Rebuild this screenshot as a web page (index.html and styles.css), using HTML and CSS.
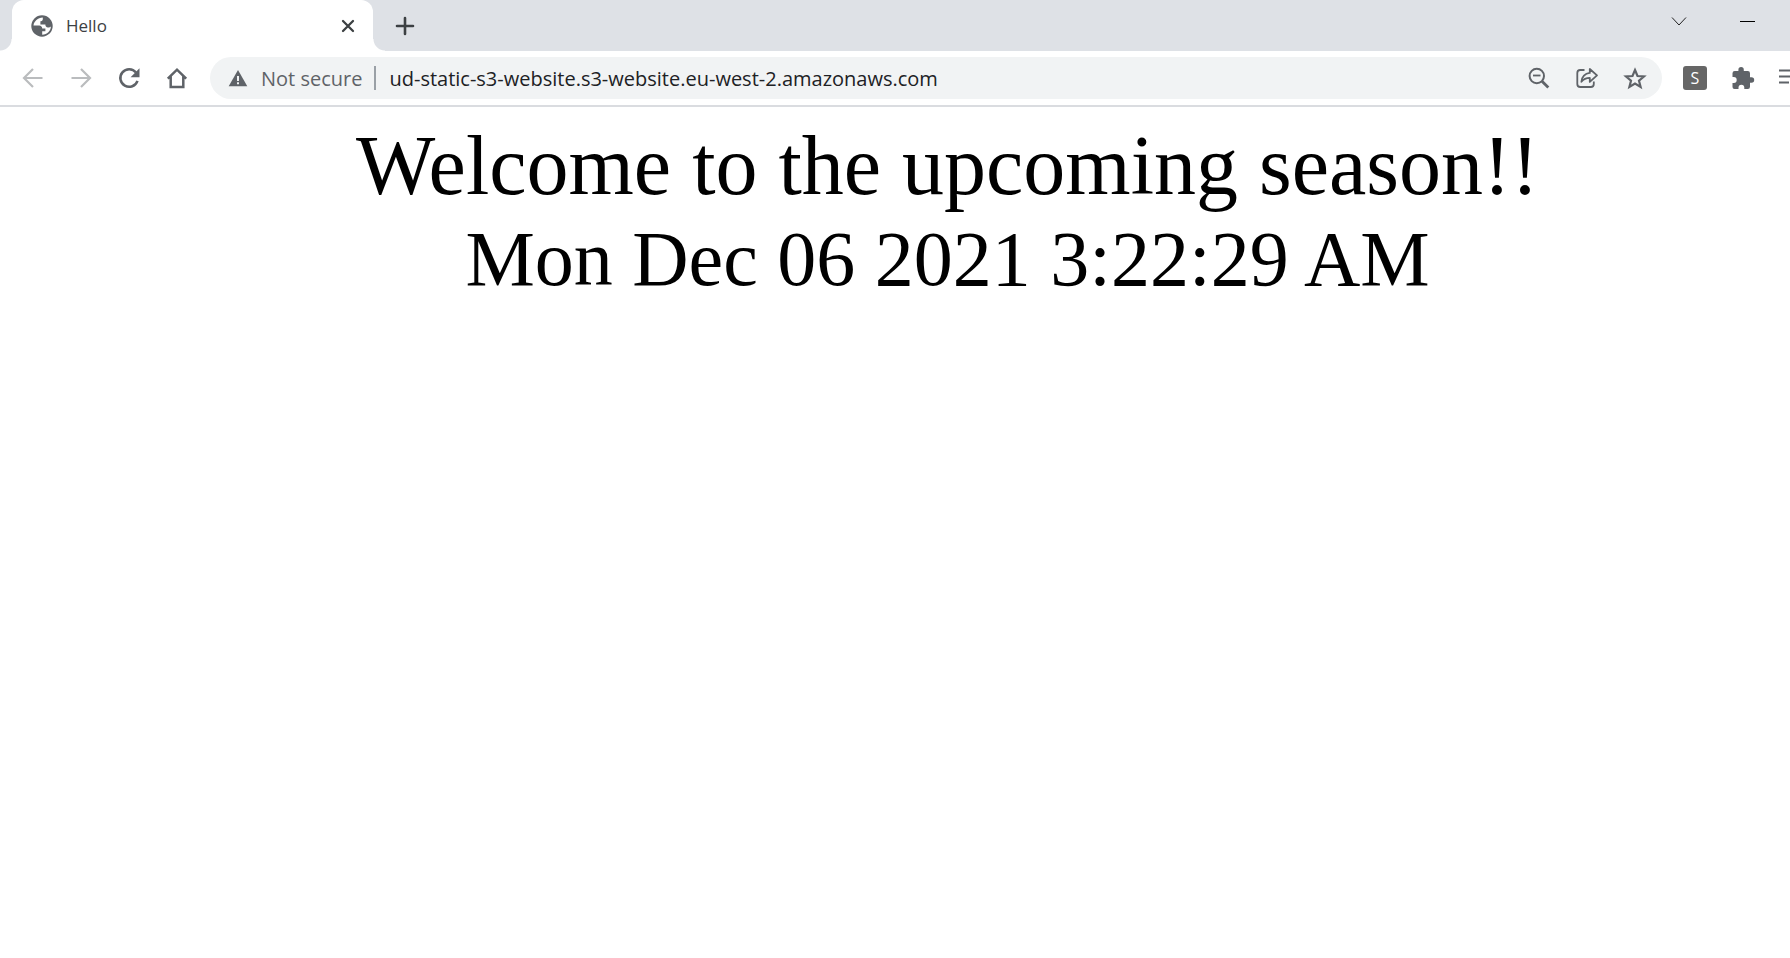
FILE: index.html
```html
<!DOCTYPE html>
<html lang="en">
<head>
<meta charset="utf-8">
<title>Hello</title>
<link rel="stylesheet" href="styles.css">
</head>
<body>
<header class="browser">
  <div class="tabstrip">
    <div class="tab">
      <svg class="icon" width="24" height="24" viewBox="0 0 24 24"><circle cx="12" cy="12" r="10.700" fill="#5f6368"/><path fill="#fff" d="M12.800 3.600c-5 .4-8.900 3.700-9.300 7.900h5.700c1.900.1 3 1.300 3 3.100h3.200v2.700h-3.200v3.400c5-.2 8.500-3.700 8.700-8.300-.8.900-1.700 1.300-2.900 1.100-1.800-.2-2.700-1.500-2.600-3.100h-5V7.200c2 .1 2.700-.7 2.400-3.600z"/></svg>
      <span class="tab-title">Hello</span>
      <button class="tab-close" aria-label="Close tab"><svg width="14" height="14" viewBox="0 0 14 14"><path d="M2 2l10 10M12 2L2 12" stroke="#3c4043" stroke-width="2.300" stroke-linecap="round"/></svg></button>
    </div>
    <button class="tool new-tab" aria-label="New tab"><svg width="20" height="20" viewBox="0 0 20 20"><path d="M10 2v16M2 10h16" stroke="#3c4043" stroke-width="2.600" stroke-linecap="round"/></svg></button>
    <div class="window-controls">
      <button class="window-button" aria-label="Search tabs"><svg width="16" height="10" viewBox="0 0 16 10"><path d="M1 1.500l7 7.500 7-7.500" fill="none" stroke="#222" stroke-width="1"/></svg></button>
      <button class="window-button" aria-label="Minimize"><svg width="16" height="10" viewBox="0 0 16 10"><path d="M0 5.500h15" stroke="#000" stroke-width="1"/></svg></button>
    </div>
  </div>
  <div class="toolbar">
    <button class="tool" aria-label="Back" disabled><svg width="24" height="24" viewBox="0 0 24 24"><path d="M21.500 12H3.500M12 3L3 12l9 9" fill="none" stroke="#babcbe" stroke-width="2.200"/></svg></button>
    <button class="tool" aria-label="Forward" disabled><svg width="24" height="24" viewBox="0 0 24 24"><path d="M2.500 12h18M12 3l9 9-9 9" fill="none" stroke="#babcbe" stroke-width="2.200"/></svg></button>
    <button class="tool" aria-label="Reload"><svg width="24" height="24" viewBox="0 0 24 24"><path d="M19 6.500A8.800 8.800 0 1 0 20.500 14.800" fill="none" stroke="#5f6368" stroke-width="2.500"/><path d="M22.500 2.300v8.900h-8.900z" fill="#5f6368"/></svg></button>
    <button class="tool" aria-label="Home"><svg width="24" height="24" viewBox="0 0 24 24"><path d="M2.800 12.600L12 3.700l9.200 8.900M5.700 10.500v10.600h12.600V10.500" fill="none" stroke="#5f6368" stroke-width="2.500"/></svg></button>
    <form class="omnibox">
      <svg class="icon" width="20" height="18" viewBox="0 0 20 18"><path d="M10 1l9.300 16.300H.7z" fill="#5f6368"/><path d="M10 7v5M10 13.200v2" stroke="#f1f3f4" stroke-width="2"/></svg>
      <label class="security" for="url">Not secure</label>
      <span class="divider"></span>
      <input class="url" id="url" type="text" spellcheck="false" value="ud-static-s3-website.s3-website.eu-west-2.amazonaws.com">
      <button class="tool" type="button" aria-label="Zoom"><svg width="24" height="24" viewBox="0 0 24 24"><circle cx="9.800" cy="10" r="7.200" fill="none" stroke="#5f6368" stroke-width="2"/><path d="M6 9.500h7.500" stroke="#5f6368" stroke-width="1.800"/><path d="M15 15.200l6.300 6.300" stroke="#5f6368" stroke-width="2.800"/></svg></button>
      <button class="tool" type="button" aria-label="Share"><svg width="24" height="24" viewBox="0 0 24 24"><path d="M9.500 4H5.200Q2.300 4 2.300 7v11q0 3 3 3h10.500q3 0 3-3v-2.500" fill="none" stroke="#5f6368" stroke-width="1.800"/><path d="M14.800 3v3.900C9.500 7.500 7 10.700 6.400 15.800c2.200-2.900 4.700-3.900 8.400-3.900v4L22 9.400z" fill="none" stroke="#5f6368" stroke-width="1.800" stroke-linejoin="round"/></svg></button>
      <button class="tool" type="button" aria-label="Bookmark"><svg width="24" height="24" viewBox="0 0 24 24"><path d="M12 4l2.500 6 6.500.5-5 4.200 1.600 6.300-5.600-3.400L6.400 21 8 14.700l-5-4.200 6.500-.5z" fill="none" stroke="#5f6368" stroke-width="2.200"/></svg></button>
    </form>
    <button class="tool" aria-label="Extension"><span class="badge">S</span></button>
    <button class="tool" aria-label="Extensions"><svg width="24" height="24" viewBox="0 0 24 24"><path d="M20.500 11.300H19V7.200a2.200 2.200 0 0 0-2.200-2.200h-4V3.700a2.700 2.700 0 0 0-5.400 0V5h-3.700a2.200 2.200 0 0 0-2.200 2.200v3.900h1.300a2.900 2.900 0 0 1 0 5.800H1.500v4A2.100 2.100 0 0 0 3.700 23h3.800v-1.400a2.900 2.900 0 0 1 5.800 0V23h3.500a2.200 2.200 0 0 0 2.200-2.200v-4.100h1.500a2.700 2.700 0 0 0 0-5.400z" fill="#5f6368"/></svg></button>
    <button class="tool cut" aria-label="Reading list"><svg width="24" height="24" viewBox="0 0 24 24"><path d="M0 4.500h18M0 10.500h18M0 16.500h10" stroke="#5f6368" stroke-width="2.200"/></svg></button>
  </div>
</header>
<main class="page">
  <div class="welcome">Welcome to the upcoming season!!</div>
  <div class="clock">Mon Dec 06 2021 3:22:29 AM</div>
</main>
</body>
</html>
```
FILE: styles.css
```css
* { box-sizing: border-box; }

body {
  margin: 0;
  background: #fff;
  font-family: "Open Sans", "Noto Sans", sans-serif;
  color: #202124;
  overflow-x: hidden;
}

button {
  border: 0;
  padding: 0;
  background: none;
  font: inherit;
  color: inherit;
}

svg { display: block; flex: none; }

.tabstrip {
  display: flex;
  height: 51px;
  padding-left: 12px;
  background: #dee1e6;
}

.tab {
  position: relative;
  display: flex;
  align-items: center;
  gap: 12px;
  width: 361px;
  padding: 0 18px;
  border-radius: 12px 12px 0 0;
  background: #fff;
}

.tab::before,
.tab::after {
  content: "";
  position: absolute;
  bottom: 0;
  width: 12px;
  height: 12px;
}

.tab::before {
  right: 100%;
  background: radial-gradient(circle at 0 0, #dee1e6 11px, #fff 12px);
}

.tab::after {
  left: 100%;
  background: radial-gradient(circle at 100% 0, #dee1e6 11px, #fff 12px);
}

.tab-title {
  flex: 1;
  font-size: 17px;
  color: #3c4043;
}

.tool {
  display: flex;
  flex: none;
  align-items: center;
  justify-content: center;
  width: 48px;
  height: 42px;
}

.new-tab {
  height: 51px;
  margin-left: 8px;
}

.window-controls {
  display: flex;
  margin-left: auto;
  padding-right: 8px;
}

.window-button {
  display: flex;
  justify-content: center;
  width: 69px;
  height: 44px;
  padding-top: 16px;
}

.toolbar {
  display: flex;
  align-items: center;
  height: 56px;
  padding-left: 9px;
  border-bottom: 2px solid #dadce0;
}

.omnibox {
  display: flex;
  flex: 1;
  align-items: center;
  min-width: 0;
  height: 42px;
  margin: 0 9px;
  padding: 0 3px 0 18px;
  border-radius: 21px;
  background: #f1f3f4;
}

.security {
  margin-left: 13px;
  font-size: 20px;
  color: #5f6368;
}

.divider {
  width: 2px;
  height: 24px;
  margin: 0 13px 0 12px;
  background: #9aa0a6;
}

.url {
  flex: 1;
  min-width: 0;
  padding: 0;
  border: 0;
  outline: 0;
  background: none;
  font: inherit;
  font-size: 20px;
  color: #202124;
}

.badge {
  width: 24px;
  height: 24px;
  border-radius: 3px;
  background: #666;
  font-size: 16px;
  line-height: 24px;
  color: #fff;
}

.cut {
  flex: 0 0 23px;
  justify-content: flex-start;
  padding-left: 12px;
  overflow: hidden;
}

.page {
  padding: 11px 0 0 105px;
  font-family: "Liberation Serif", "Times New Roman", serif;
  text-align: center;
  color: #000;
}

.welcome {
  font-size: 84px;
  line-height: 96px;
}

.clock {
  font-size: 78px;
  line-height: 90px;
}
```
